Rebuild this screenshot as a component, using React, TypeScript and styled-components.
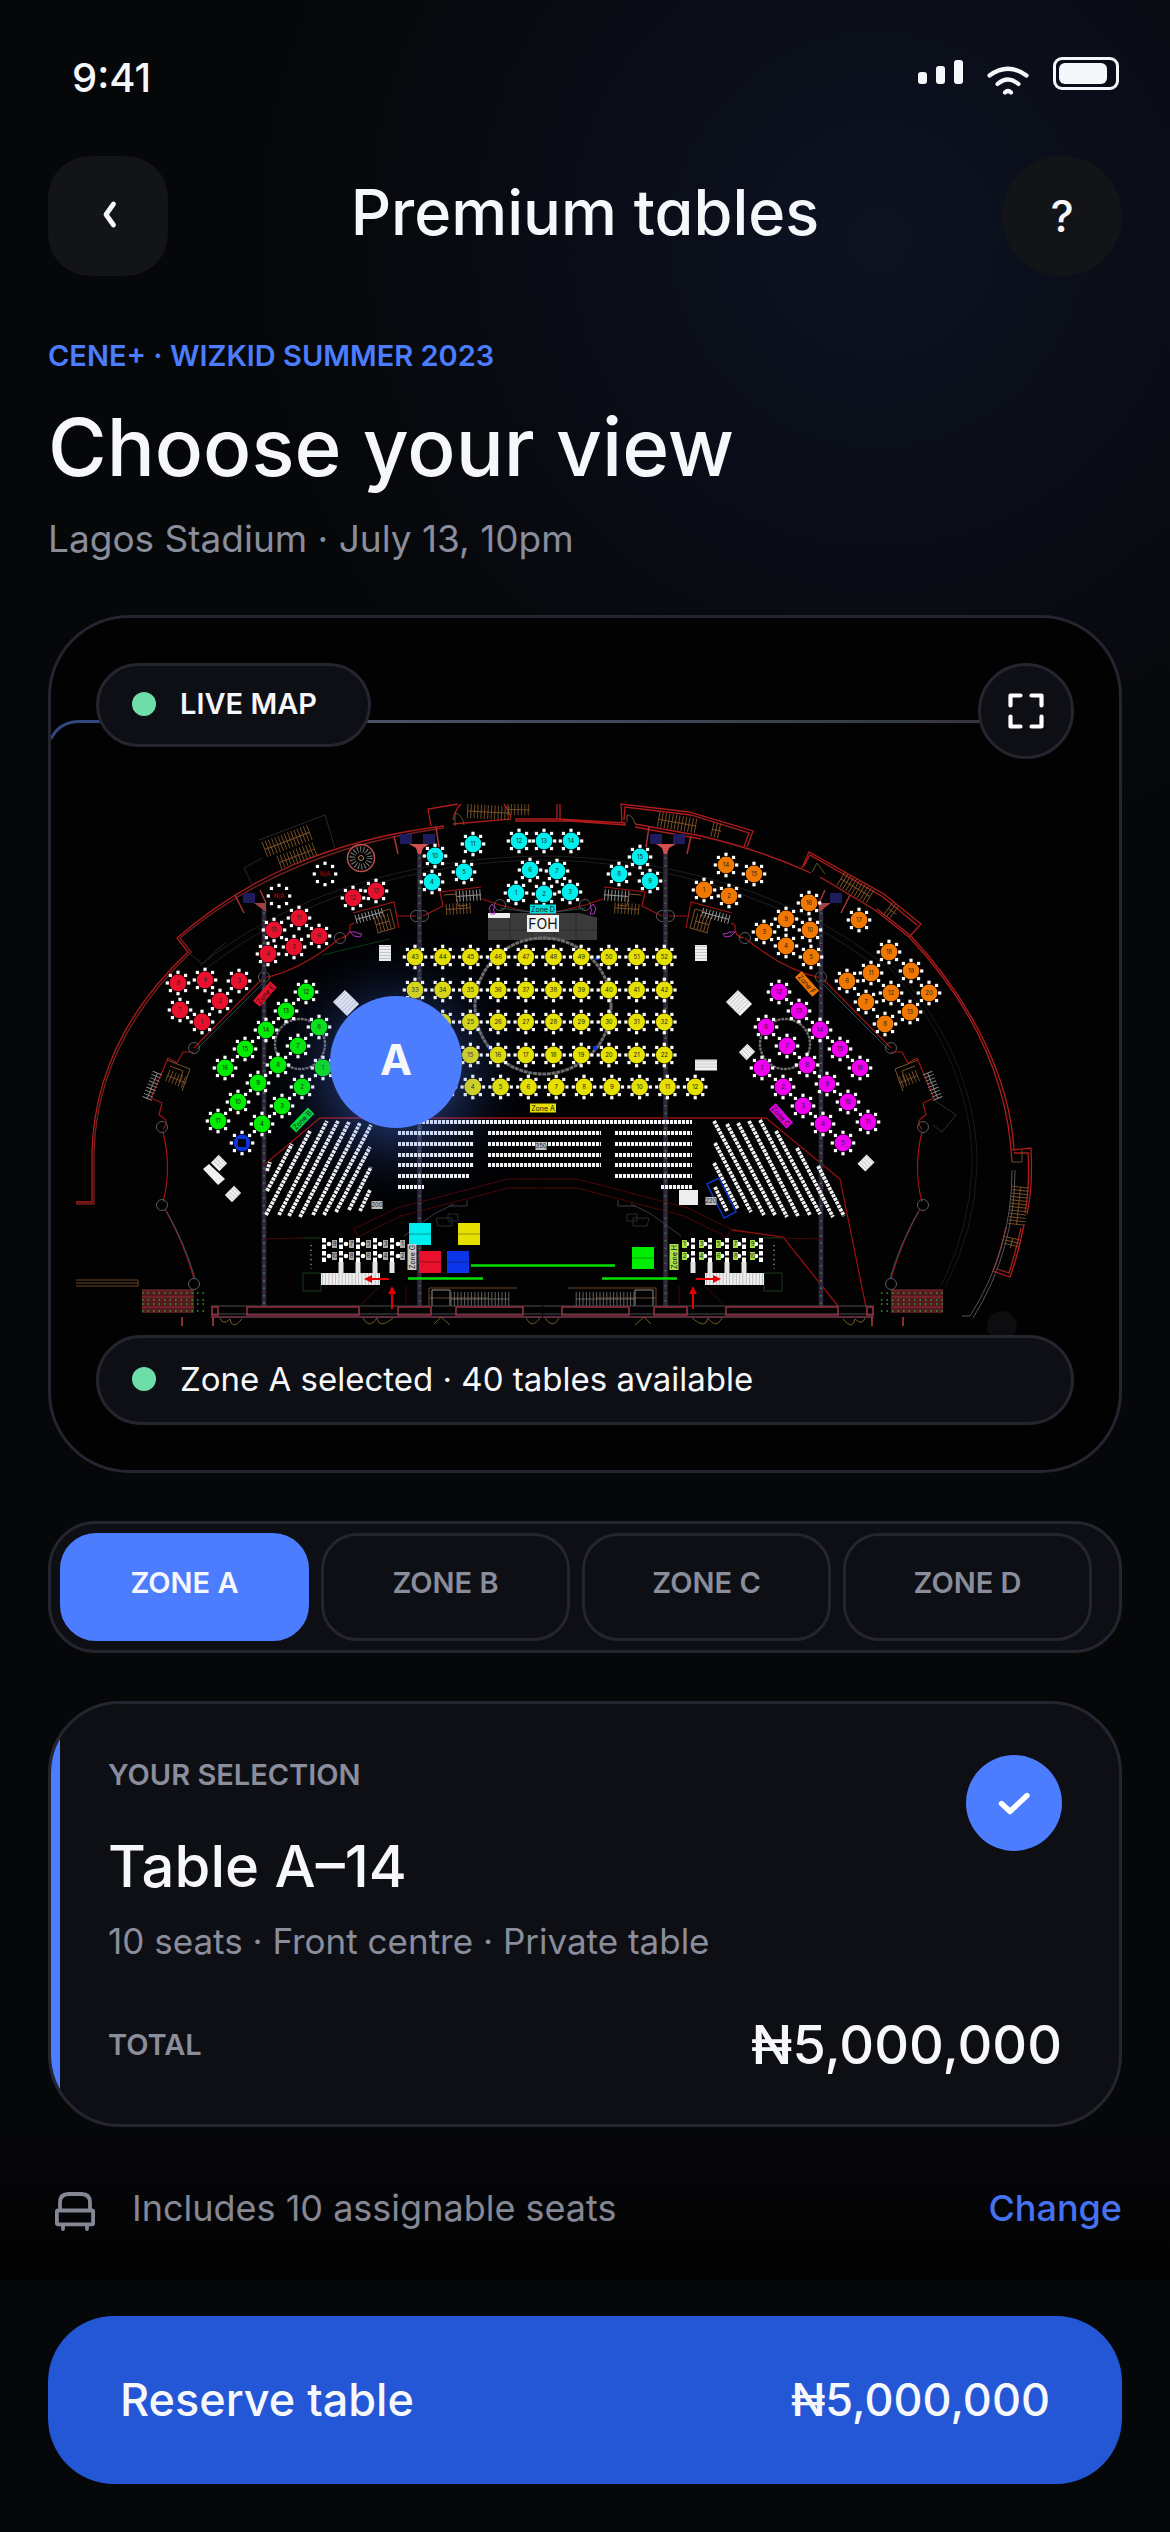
import React, { useState } from "react";
import styled, { createGlobalStyle } from "styled-components";

const color = {
  page: "#060709",
  panel: "#0e0f14",
  line: "#24252e",
  text: "#f6f7fb",
  muted: "#8a8d9b",
  accent: "#4c7dff",
  cta: "#2457d6",
  live: "#6dddaa",
};

const GlobalStyle = createGlobalStyle`
  *, *::before, *::after { box-sizing: border-box; }
  body {
    margin: 0;
    background: ${color.page};
    color: ${color.text};
    font-family: Inter, "Liberation Sans", sans-serif;
  }
  button { font: inherit; color: inherit; border: 0; padding: 0; cursor: pointer; }
  h1, h2, h3, p { margin: 0; }
`;

/* ---------- page ---------- */

const Page = styled.div`
  min-height: 100vh;
  display: flex;
  flex-direction: column;
  background: radial-gradient(circle 620px at 75% 240px, #0c1322 0%, #0a0d17 45%, rgba(6, 7, 9, 0) 100%), ${color.page};
`;

const StatusBar = styled.div`
  height: 156px;
  padding: 0 51px 0 72px;
  display: flex;
  align-items: center;
  justify-content: space-between;
`;

const Clock = styled.time`
  font-size: 40px;
  line-height: 48px;
  font-weight: 500;
`;

const Header = styled.header`
  height: 120px;
  padding: 0 48px;
  display: flex;
  align-items: center;
  justify-content: space-between;
`;

const Title = styled.h1`
  padding-bottom: 9px;
  font-size: 63px;
  line-height: 72px;
  font-weight: 500;
  font-feature-settings: "cv11";
`;

const HeaderButton = styled.button<{ $round?: boolean }>`
  width: 120px;
  height: 120px;
  display: grid;
  place-items: center;
  border-radius: ${(p) => (p.$round ? "60px" : "42px")};
  background: #131417;
  font-size: 44px;
  line-height: 54px;
  font-weight: 500;
`;

const Main = styled.main`
  flex: 1;
  display: flex;
  flex-direction: column;
`;

const Intro = styled.section`
  padding: 60px 48px 51px;
`;

const Label = styled.p<{ $tone?: string }>`
  font-size: 29px;
  line-height: 39px;
  font-weight: 600;
  color: ${(p) => p.$tone ?? color.muted};
`;

const Headline = styled.h2`
  margin-top: 24px;
  font-size: 80px;
  line-height: 96px;
  font-weight: 500;
  font-feature-settings: "cv11";
`;

const Venue = styled.p`
  margin-top: 18px;
  font-size: 37px;
  line-height: 51px;
  color: ${color.muted};
`;

/* ---------- map ---------- */

const MapCard = styled.section`
  position: relative;
  margin: 0 48px;
  border: 3px solid ${color.line};
  border-radius: 81px;
  background: #020203;
  overflow: hidden;
`;

const Plan = styled.svg`
  display: block;
  width: 100%;
  height: auto;
`;

const MapOverlay = styled.div`
  position: absolute;
  inset: 0;
  padding: 45px;
  display: flex;
  flex-direction: column;
  justify-content: space-between;
`;

const MapTools = styled.div`
  display: flex;
  align-items: flex-start;
  justify-content: space-between;
`;

const Pill = styled.div<{ $tall?: boolean }>`
  height: ${(p) => (p.$tall ? "90px" : "84px")};
  padding: 0 51px 3px 33px;
  display: flex;
  align-items: center;
  gap: 24px;
  border: 3px solid ${color.line};
  border-radius: 45px;
  background: ${color.panel};
  font-size: ${(p) => (p.$tall ? "33px" : "29px")};
  line-height: 42px;
  font-weight: ${(p) => (p.$tall ? 400 : 600)};
`;

const Dot = styled.span`
  width: 24px;
  height: 24px;
  border-radius: 12px;
  background: ${color.live};
`;

const ExpandButton = styled.button`
  width: 96px;
  height: 96px;
  display: grid;
  place-items: center;
  border: 3px solid ${color.line};
  border-radius: 48px;
  background: ${color.panel};
`;

const ZonePin = styled.button`
  position: absolute;
  left: 32.3%;
  top: 52.1%;
  width: 132px;
  height: 132px;
  margin: -66px 0 0 -66px;
  padding-bottom: 6px;
  border-radius: 66px;
  background: ${color.accent};
  box-shadow: 0 12px 72px rgba(76, 125, 255, 0.6);
  font-size: 43px;
  line-height: 54px;
  font-weight: 700;
`;

/* ---------- zone tabs ---------- */

const Tabs = styled.div`
  margin: 48px 48px 0;
  padding: 9px 27px 9px 9px;
  display: grid;
  grid-template-columns: repeat(4, 1fr);
  gap: 12px;
  border: 3px solid ${color.line};
  border-radius: 48px;
  background: ${color.panel};
`;

const Tab = styled.button<{ $active: boolean }>`
  height: 108px;
  padding-bottom: 9px;
  border: 3px solid ${(p) => (p.$active ? color.accent : color.line)};
  border-radius: 36px;
  background: ${(p) => (p.$active ? color.accent : "transparent")};
  color: ${(p) => (p.$active ? color.text : color.muted)};
  font-size: 29px;
  line-height: 39px;
  font-weight: 600;
`;

/* ---------- selection ---------- */

const Selection = styled.section`
  position: relative;
  margin: 48px 48px 0;
  padding: 51px 57px 45px;
  border: 3px solid ${color.line};
  border-radius: 72px;
  background: ${color.panel};
  overflow: hidden;

  &::before {
    content: "";
    position: absolute;
    inset: 0 auto 0 0;
    width: 9px;
    background: ${color.accent};
  }
`;

const SelectionTop = styled.div`
  display: flex;
  align-items: flex-start;
  justify-content: space-between;
`;

const TableName = styled.h3`
  margin-top: 36px;
  font-size: 58px;
  line-height: 72px;
  font-weight: 500;
`;

const TableMeta = styled.p`
  margin-top: 15px;
  font-size: 35px;
  line-height: 48px;
  color: ${color.muted};
`;

const CheckBadge = styled.span`
  width: 96px;
  height: 96px;
  display: grid;
  place-items: center;
  border-radius: 48px;
  background: ${color.accent};
`;

const TotalRow = styled.div`
  margin-top: 45px;
  display: flex;
  align-items: center;
  justify-content: space-between;
`;

const Price = styled.strong`
  font-size: 54px;
  line-height: 69px;
  font-weight: 500;
`;

const SeatsNote = styled.div`
  flex: 1;
  padding: 54px 48px 45px;
  display: flex;
  align-items: flex-start;
  gap: 30px;
  background: linear-gradient(rgba(2, 2, 3, 0), #020203);
  color: #858894;
  font-size: 36px;
  line-height: 54px;
`;

const ChangeButton = styled.button`
  margin-left: auto;
  background: none;
  color: #4671f0;
  font-weight: 500;
`;

const Footer = styled.footer`
  padding: 36px 48px 48px;
  background: ${color.page};
`;

const Reserve = styled.button`
  width: 100%;
  height: 168px;
  padding: 0 72px;
  display: flex;
  align-items: center;
  justify-content: space-between;
  border-radius: 66px;
  background: ${color.cta};
  font-size: 45px;
  line-height: 54px;
  font-weight: 500;
`;

/* ---------- floor plan data ---------- */

type Spot = [number, number, number];

const zones: { fill: string; spots: Spot[] }[] = [
  {
    fill: "#00eeee",
    spots: [
      [435, 856, 10], [473, 844, 11], [432, 882, 4], [464, 872, 5], [519, 841, 12], [544, 841, 13], [571, 841, 14],
      [530, 870, 6], [557, 871, 7], [516, 893, 1], [544, 894, 2], [570, 892, 3], [640, 857, 15], [619, 874, 8], [650, 881, 9],
    ],
  },
  {
    fill: "#e8112d",
    spots: [
      [353, 898, 12], [376, 891, 13], [274, 930, 10], [299, 918, 11], [319, 936, 6], [294, 947, 5], [268, 954, 4],
      [178, 983, 8], [205, 980, 9], [239, 981, 3], [220, 1001, 2], [180, 1010, 7], [202, 1022, 1],
    ],
  },
  {
    fill: "#f07800",
    spots: [
      [726, 865, 14], [754, 874, 15], [704, 890, 1], [729, 896, 2], [809, 903, 16], [786, 919, 9], [859, 920, 17],
      [764, 932, 3], [810, 930, 10], [786, 946, 4], [811, 957, 5], [889, 952, 18], [871, 973, 11], [847, 981, 6],
      [911, 971, 19], [891, 993, 12], [929, 993, 20], [866, 1002, 7], [910, 1012, 13], [885, 1024, 8],
    ],
  },
  {
    fill: "#00ec00",
    spots: [
      [306, 992, 12], [286, 1011, 13], [266, 1030, 14], [245, 1049, 15], [225, 1068, 16], [319, 1027, 6], [298, 1046, 7],
      [278, 1065, 8], [258, 1083, 9], [238, 1102, 10], [218, 1121, 11], [323, 1068, 1], [302, 1087, 2], [282, 1106, 3], [262, 1124, 4],
    ],
  },
  {
    fill: "#ee00ee",
    spots: [
      [779, 992, 12], [799, 1011, 13], [820, 1030, 14], [840, 1049, 15], [860, 1068, 16], [766, 1027, 6], [787, 1046, 7],
      [807, 1065, 8], [827, 1084, 9], [848, 1102, 10], [868, 1122, 11], [762, 1068, 1], [783, 1087, 2], [803, 1106, 3],
      [823, 1124, 4], [843, 1143, 5],
    ],
  },
  {
    fill: "#e6e000",
    spots: [
      ...[957, 990, 1022, 1055].flatMap((y, row) =>
        Array.from({ length: 10 }, (_, i): Spot => [415 + i * 27.7, y, 43 - row * 10 + i])
      ),
      ...Array.from({ length: 10 }, (_, i): Spot => [445 + i * 27.8, 1087, i + 3]),
    ],
  },
];

const leftStalls = [
  [267, 1171, 270, 1162], [267, 1191, 292, 1144], [266, 1215, 310, 1131], [279, 1215, 327, 1121], [289, 1216, 338, 1121],
  [300, 1217, 349, 1122], [313, 1215, 360, 1123], [324, 1215, 371, 1125], [336, 1212, 370, 1147], [349, 1210, 371, 1167],
  [360, 1211, 370, 1190],
];

const rightStalls = [
  [715, 1187, 727, 1211], [714, 1163, 738, 1209], [715, 1143, 751, 1212], [714, 1121, 764, 1215], [727, 1124, 775, 1215],
  [738, 1123, 787, 1217], [749, 1121, 798, 1216], [760, 1120, 810, 1215], [776, 1131, 820, 1214], [797, 1148, 833, 1217],
  [818, 1166, 844, 1216],
];

const centreStalls = [
  [398, 1122, 692],
  ...[1133, 1144, 1155, 1165].flatMap((y) => [[398, y, 474], [488, y, 601], [615, y, 692]]),
  [398, 1176, 469], [615, 1176, 692], [398, 1187, 424], [661, 1187, 692],
];

const seatOffsets = Array.from({ length: 8 }, (_, i) => {
  const a = (i * Math.PI) / 4;
  return [Math.cos(a) * 10.7, Math.sin(a) * 10.7];
});

function TableSpot({ x, y, fill, label }: { x: number; y: number; fill: string; label: string }) {
  return (
    <g transform={`translate(${x} ${y})`}>
      {seatOffsets.map(([dx, dy], i) => (
        <rect key={i} x={dx - 1.6} y={dy - 1.6} width="3.2" height="3.2" fill="#fff" />
      ))}
      <circle r="8.4" fill={fill} />
      <text y="2.2" textAnchor="middle" fontSize="6" fill={fill === "none" ? "#c00" : "#26261c"}>
        {label}
      </text>
    </g>
  );
}

function ZoneTag({ x, y, r = 0, fill, name, ink = "#111" }: { x: number; y: number; r?: number; fill: string; name: string; ink?: string }) {
  return (
    <g transform={`translate(${x} ${y}) rotate(${r})`}>
      <rect x="-13" y="-4.5" width="26" height="9" fill={fill} />
      <text y="2.8" textAnchor="middle" fontSize="7" fill={ink}>
        {name}
      </text>
    </g>
  );
}

function Steps({ x, y, w, h, r = 0 }: { x: number; y: number; w: number; h: number; r?: number }) {
  return (
    <g transform={`translate(${x} ${y}) rotate(${r})`}>
      <rect x={-w / 2} y={-h / 2} width={w} height={h} fill="#f0f0f0" />
      {Array.from({ length: Math.floor(h / 3) }, (_, i) => (
        <path key={i} d={`M${-w / 2} ${-h / 2 + i * 3 + 1.5}h${w}`} stroke="#b5b5b5" strokeWidth=".7" />
      ))}
    </g>
  );
}

function HatchStairs({ x, y, w, h, r = 0, stroke = "#7d5226" }: { x: number; y: number; w: number; h: number; r?: number; stroke?: string }) {
  return (
    <g transform={`translate(${x} ${y}) rotate(${r})`} stroke={stroke} strokeWidth=".9" fill="none">
      {Array.from({ length: Math.floor(w / 3.4) + 1 }, (_, i) => (
        <path key={i} d={`M${i * 3.4} 0v${h}`} />
      ))}
      <path d={`M0 ${h / 2}h${w}`} />
    </g>
  );
}

/* Structure shared by both sides of the hall; the right side is its mirror image. */
function HallSide() {
  return (
    <g fill="none">
      <path d="M264 978C292 972 316 958 340 938M194 1048L263 978M341 938q10-1 9-13l4-2M353 913l41-11 5 26M398 916h18M423 916l20-10-3-14 41-5M482 899l18 6q40 10 42 10" stroke="#a01414" strokeWidth="1.2" />
      <path d="M194 1052h-11l-6 11-9-5-17 40 11 5-3 12q12 6 4 14M163 1132q9 36 0 70M165 1209q20 36 29 70" stroke="#a01414" strokeWidth="1.2" />
      <path d="M196 1050L266 980M167 1212q18 32 28 66M500 908q22 4 42 4" stroke="#2a6468" strokeWidth=".8" />
      <g stroke="#5a5a5e" strokeWidth="1">
        <circle cx="264" cy="977" r="5.5" />
        <circle cx="340" cy="938" r="5.5" />
        <circle cx="416" cy="916" r="5.5" />
        <circle cx="423" cy="916" r="5.5" />
        <circle cx="500" cy="905" r="5.5" />
        <circle cx="194" cy="1048" r="5.5" />
        <circle cx="162" cy="1127" r="5.5" />
        <circle cx="162" cy="1205" r="5.5" />
        <circle cx="194" cy="1284" r="5.5" />
      </g>
      <HatchStairs x={355} y={915} w={28} h={9} r={-15} stroke="#9a9a9a" />
      <HatchStairs x={456} y={891} w={25} h={11} r={-4} stroke="#9a9a9a" />
      <HatchStairs x={374} y={917} w={14} h={16} r={-15} />
      <HatchStairs x={446} y={904} w={24} h={11} r={-4} />
      <path d="M380 912l10-3 5 19-18 5M444 895l12-1 2 12 10-1" stroke="#7d5226" strokeWidth="1" />
      <HatchStairs x={162} y={1075} w={28} h={10} r={112} stroke="#8a8a8a" />
      <HatchStairs x={170} y={1070} w={20} h={12} r={22} />
      <path d="M167 1060l23 9-8 22M170 1066l13 5-4 12" stroke="#7d5226" strokeWidth="1" />
      <circle cx="300" cy="1044" r="25" stroke="#6c6c6c" strokeWidth="2.4" strokeDasharray="3 .8" />
      <path d="M419.5 850V1306M264 905V1306" stroke="#34263f" strokeWidth="4.5" />
      <path d="M419.5 850V1306M264 905V1306" stroke="#2f7c35" strokeWidth="2" strokeDasharray="1.5 6" />
      <path d="M409 844h20l-6 4-2 6h-3l-2-6z" fill="#d05050" />
      <path d="M254 903h12v9z" fill="#a04040" />
      <rect x="400" y="834" width="12" height="10" fill="#1e1c5c" />
      <rect x="423" y="834" width="12" height="10" fill="#1e1c5c" />
      <rect x="243" y="893" width="12" height="10" fill="#1e1c5c" />
      <path d="M394 836l4 18M436 827l3 20M260 890l6 13M235 895l9 18" stroke="#a33" strokeWidth="1.5" />
      <path d="M354 1229l43-21 111-29h34M358 1237l43-21 107-28h34M354 1229l4 8" stroke="#4a0808" strokeWidth="1" />
      <path d="M264 1239l39-1" stroke="#4a0808" />
      <path d="M200 966C280 900 400 858 542 856M202 972C284 906 402 862 542 860" stroke="#1e1e20" strokeWidth="1" />
      <path d="M142 1290h52v23h-52z" fill="#541b1f" />
      <path d="M142 1293h62M142 1300h62M142 1304h62M142 1311h66" stroke="#3f9a36" strokeWidth="1.3" strokeDasharray="1.5 4" />
      <path d="M142 1290h52M142 1297h52M142 1307h52" stroke="#8a3034" />
      <path d="M429 1306v-18h88M429 1298h60" stroke="#6b4520" />
      <path d="M432 1306v-16h18v16" stroke="#909090" />
      <HatchStairs x={451} y={1292} w={58} h={14} stroke="#6a6a6a" />
      <path d="M211 1306h331M211 1314h331" stroke="#4c4c50" />
      <path d="M211 1317h331" stroke="#7c3a56" strokeWidth="1.5" />
      <path d="M212 1307h6v8h-6zM247 1307h112v8h-112zM398 1307h33v8h-33zM456 1307h67v8h-67z" stroke="#94323f" strokeWidth="1.6" />
      <path d="M220 1318q3 8 10 1 2 12 12 0M363 1318q6 12 14 0 2 12 16 0M434 1324l7-7 9 8M526 1318q6 12 14 0" stroke="#6f5a22" />
      <path d="M182 1317v9M213 1317v9" stroke="#8a3034" strokeWidth="2" />
      <path d="M303 1238h18M303 1273h18v18h-18z" stroke="#193a1b" />
      <path d="M311 1245v24" stroke="#bbb" strokeWidth="1.2" strokeDasharray="1.2 3.5" />
      <path d="M436 1218h16v8h-14zM448 1214h10v7h-10z" stroke="#2b2b2e" />
      <path d="M404 1236l30-22 20-10M467 1200v6h-18" stroke="#3c3c40" />
      <path d="M378 1288l-18 18M406 1286v20" stroke="#3a0808" />
      <path d="M324 1238v25M341 1238v25M358 1238v25M375 1238v25M392 1238v25" stroke="#fff" strokeWidth="4" strokeDasharray="4.5 2" />
      <path d="M341 1262v11M358 1262v11M375 1262v11M392 1262v11" stroke="#e4e4e4" strokeWidth="5" />
      {[329, 346, 363, 380, 398].map((x) => (
        <g key={x} fill="#fff">
          <circle cx={x} cy="1244" r="2.3" />
          <circle cx={x} cy="1256" r="2.3" />
        </g>
      ))}
      <rect x="321" y="1273" width="59" height="12" fill="#eee" />
      <path d="M322 1279h58" stroke="#b0b0b0" strokeWidth="12" strokeDasharray=".7 2.6" />
      <path d="M389 1279h-18" stroke="#e60000" strokeWidth="2" />
      <path d="M364 1279l8-4v8z" fill="#e60000" />
      <path d="M392 1309v-16" stroke="#e60000" strokeWidth="2" />
      <path d="M392 1286l-4 8h8z" fill="#e60000" />
      <path d="M408 1278.5h75" stroke="#00e000" strokeWidth="2.5" />
      <path d="M491 914l-2-6 3-4 3 4-2 1 2 5z" stroke="#b030c0" />
      <path d="M360 937l-6-1-4-4 6 0 1 1 5 1z" stroke="#b030c0" />
    </g>
  );
}

function FloorPlan() {
  return (
    <Plan viewBox="51 618 1068 852" role="img" aria-label="Seating plan" fontFamily="Inter, Liberation Sans, sans-serif">
      <defs>
        <linearGradient id="rim" x1="51" x2="1119" y1="0" y2="0" gradientUnits="userSpaceOnUse">
          <stop offset="0" stopColor="#2f4782" />
          <stop offset=".3" stopColor="#4a5268" />
          <stop offset="1" stopColor="#2e3034" />
        </linearGradient>
      </defs>
      <path d="M51 739Q59 721.5 80 721.5H1000" fill="none" stroke="url(#rim)" strokeWidth="3" />

      <g fill="none" stroke="#b01c1c" strokeWidth="1.3">
        <path d="M76 1202h16v-50C94 1080 124 1012 188 952l-11-14C246 878 330 840 444 826" />
        <path d="M76 1204h18v-52C96 1082 126 1014 191 952l-11-14C248 881 334 843 444 828" stroke="#7a2020" />
        <path d="M431 826l-3-17 30-5M453 824l58-5M453 820q2-10 8-16M504 804q6 8 7 14M515 819h43l68 4M515 821h55l56 4M557 804v15M560 804v15" />
        <path d="M622 822l-1-18 68 8 64 19-6 16M635 824l66 12q60 14 110 37M635 827l66 12M624 820l1-13 66 8 58 18-5 14" />
        <path d="M802 868l7-16 75 42 37 30-12 13M804 866l6-11 73 42 34 28M820 877l55 33M875 910l34 27C972 1004 1008 1080 1012 1162M877 909l34 27C974 1004 1010 1080 1014 1150" />
        <path d="M1012 1150l19-2q2 40-4 66M1024 1225q-6 30-14 52l-17-6q8-20 13-44M1014 1153h14q2 32-3 60M1021 1228q-6 26-12 45l-12-4" />
        <path d="M264 1165l56-47h446l74 61 26 128M732 1230l51 7 55 69" stroke="#960f0f" />
      </g>
      <g fill="none" stroke="#55555a">
        <path d="M1012 1170q0 80-42 146h-8M1015 1170q0 80-42 148" />
        <path d="M893 966C952 1030 978 1100 977 1167Q975 1230 945 1287M888 966C946 1030 973 1100 972 1167Q970 1228 941 1286" stroke="#19191b" />
        <path d="M259 840l66-25 10 33M244 868l18-10M244 868l8 16" stroke="#29292c" />
        <path d="M188 952l14 12 24-22" stroke="#29292c" />
        <path d="M934 1100l22 15-14 17-9-7" stroke="#24332a" />
        <path d="M322 955l68-16" stroke="#0c3a12" />
      </g>

      <HatchStairs x={262} y={842} w={48} h={16} r={-21} />
      <HatchStairs x={277} y={856} w={38} h={14} r={-21} />
      <HatchStairs x={468} y={804} w={42} h={14} r={3} />
      <HatchStairs x={508} y={804} w={22} h={11} r={1} />
      <HatchStairs x={660} y={812} w={38} h={15} r={10} />
      <HatchStairs x={714} y={822} w={9} h={15} r={12} />
      <HatchStairs x={845} y={872} w={34} h={16} r={31} />
      <HatchStairs x={893} y={902} w={10} h={16} r={36} />
      <HatchStairs x={1029} y={1188} w={38} h={17} r={96} />
      <HatchStairs x={1020} y={1240} w={10} h={15} r={103} />
      <path d="M76 1280h62M76 1283h62M76 1286h62v-6" stroke="#6b4520" fill="none" />
      <path d="M455 826v-13q8 2 9 12M627 822v-7q6 0 8 9M812 872l5-9 8 11M1012 1162h10v-12" stroke="#5d5325" fill="none" />

      <circle cx="361" cy="858" r="13.5" fill="none" stroke="#b85050" strokeWidth="1.5" />
      <circle cx="361" cy="858" r="8.5" fill="none" stroke="#777" strokeWidth="6" strokeDasharray="1 2" />
      <circle cx="361" cy="858" r="2.5" fill="none" stroke="#b08040" />

      <rect x="488" y="913" width="109" height="27" fill="#3a3a3a" />
      <path d="M488 930h109M510 913v27M532 913v27M554 913v27M576 913v27" stroke="#2a2a2a" />
      <path d="M575 912h24v6z" fill="#020203" />
      <rect x="488" y="913" width="22" height="5" fill="#eee" />
      <circle cx="543" cy="1006" r="68" fill="none" stroke="#6c6c6c" strokeWidth="3" strokeDasharray="4 .7" />

      <HallSide />
      <g transform="translate(1085 0) scale(-1 1)">
        <HallSide />
      </g>

      {[[490, 1048], [595, 1048], [489, 958], [597, 958]].map(([x, y]) => (
        <circle key={`${x}-${y}`} cx={x} cy={y} r="2.2" fill="#0b3be0" />
      ))}

      <g stroke="#f4f4f4" strokeWidth="3.8" strokeDasharray="3.1 .9" fill="none">
        {centreStalls.map(([x1, y, x2]) => (
          <path key={`${x1}-${y}`} d={`M${x1} ${y}H${x2}`} />
        ))}
        {[...leftStalls, ...rightStalls].map(([x1, y1, x2, y2]) => (
          <path key={`${x1}-${y1}`} d={`M${x1} ${y1}L${x2} ${y2}`} />
        ))}
      </g>
      <path d="M707 1184l12-6 17 34-12 6z" fill="none" stroke="#0a35c8" strokeWidth="1.5" />

      <Steps x={385} y={953} w={12} h={16} />
      <Steps x={701} y={953} w={12} h={16} />
      <Steps x={346} y={1003} w={17} h={20} r={-45} />
      <Steps x={739} y={1003} w={17} h={20} r={-45} />
      <Steps x={747} y={1052} w={11} h={12} r={45} />
      <Steps x={706} y={1065} w={22} h={11} />
      <Steps x={866} y={1163} w={11} h={13} r={45} />
      <Steps x={219} y={1163} w={12} h={11} r={45} />
      <Steps x={233} y={1194} w={10} h={13} r={45} />
      <path d="M203 1169l6-5 16 15-7 6z" fill="#f0f0f0" />
      <rect x="679" y="1190" width="19" height="15" fill="#eee" />

      {zones.map((zone) =>
        zone.spots.map(([x, y, n]) => <TableSpot key={`${zone.fill}-${n}`} x={x} y={y} fill={zone.fill} label={String(n)} />)
      )}
      <TableSpot x={325} y={874} fill="none" label="N/A" />
      <TableSpot x={279} y={896} fill="none" label="N/A" />
      <TableSpot x={242} y={1143} fill="#0a35d8" label="" />
      <rect x="238" y="1139" width="8" height="8" fill="#05060a" />

      <ZoneTag x={543} y={909} fill="#00dede" name="Zone D" />
      <rect x="527" y="915" width="32" height="17" fill="#f2f2f2" />
      <text x="543" y="929" textAnchor="middle" fontSize="14" fill="#111">FOH</text>
      <ZoneTag x={265} y={994} r={-49} fill="#e8112d" name="Zone E" />
      <ZoneTag x={302} y={1120} r={-46} fill="#00e030" name="Zone B" />
      <ZoneTag x={781} y={1116} r={48} fill="#e000e0" name="Zone C" />
      <ZoneTag x={807} y={984} r={48} fill="#f07800" name="Zone F" />
      <ZoneTag x={543} y={1108} fill="#e6e000" name="Zone A" />

      <rect x="409" y="1223" width="22" height="22" fill="#00eeee" />
      <rect x="458" y="1223" width="22" height="22" fill="#e6e000" />
      <rect x="419" y="1251" width="22" height="22" fill="#e8112d" />
      <rect x="447" y="1251" width="22" height="22" fill="#0a35e8" />
      <rect x="632" y="1247" width="22" height="22" fill="#00ee00" />
      <path d="M409 1234h22M458 1234h22M419 1262h22M447 1262h22M632 1258h22" stroke="#000" strokeOpacity=".35" />
      <path d="M471 1265.5h144" stroke="#00e000" strokeWidth="2.5" />
      <ZoneTag x={412} y={1257} r={-90} fill="#c8c8c8" name="Zone G" />
      <ZoneTag x={674} y={1257} r={-90} fill="#a6e04a" name="Zone H" />

      {[["200", 377, 1205], ["350", 541, 1146], ["220", 711, 1201]].map(([t, x, y]) => (
        <g key={t} transform={`translate(${x} ${y})`}>
          <rect x="-5.5" y="-4" width="11" height="8" fill="#bbb" />
          <text y="2.2" textAnchor="middle" fontSize="6" fill="#222">{t}</text>
        </g>
      ))}
      {[0, 1, 2, 3, 4].flatMap((i) =>
        [0, 1].map((row) => (
          <React.Fragment key={`${i}-${row}`}>
            <rect x={400 - i * 17} y={1240 + row * 12} width="5" height="8" fill="#aaa" />
            <text x={402.5 - i * 17} y={1246 + row * 12} textAnchor="middle" fontSize="6" fill="#222">{i * 2 + 1 + row}</text>
            <rect x={682 + i * 17} y={1240 + row * 12} width="5" height="8" fill="#a6e04a" />
            <text x={684.5 + i * 17} y={1246 + row * 12} textAnchor="middle" fontSize="6" fill="#222">{i * 2 + 1 + row}</text>
          </React.Fragment>
        ))
      )}
      <circle cx="1002" cy="1326" r="15" fill="#0d0d0f" />
    </Plan>
  );
}

/* ---------- icons ---------- */

const StatusIcons = () => (
  <svg width="204" height="48" viewBox="915 54 204 48" fill="none" aria-hidden="true">
    <g fill={color.text}>
      <rect x="918" y="72" width="9" height="12" rx="3" />
      <rect x="936" y="66" width="9" height="18" rx="3" />
      <rect x="954" y="60" width="9" height="24" rx="3" />
      <rect x="1059" y="63" width="48" height="21" rx="6" />
    </g>
    <rect x="1054.5" y="58.5" width="63" height="30" rx="7.5" stroke={color.text} strokeWidth="3" />
    <path d="M989.5 75.5Q1008 62 1026.500 75.5M997.5 84Q1008 75 1018.5 84M1005 92.500Q1008 89.500 1011 92.5" stroke={color.text} strokeWidth="4.2" strokeLinecap="round" />
  </svg>
);

const BackIcon = () => (
  <svg width="24" height="36" viewBox="96 198 24 36" fill="none" aria-hidden="true">
    <path d="M113.5 204L106 214.5l7.500 10.5" stroke={color.text} strokeWidth="4.8" strokeLinecap="round" strokeLinejoin="round" />
  </svg>
);

const ExpandIcon = () => (
  <svg width="36" height="36" viewBox="0 0 36 36" fill="none" aria-hidden="true">
    <path d="M2.5 12.5V2.5h10M23.5 2.5h10v10M33.5 23.5v10h-10M12.5 33.5h-10v-10" stroke="#fff" strokeWidth="4.2" strokeLinecap="round" strokeLinejoin="round" />
  </svg>
);

const CheckIcon = () => (
  <svg width="36" height="36" viewBox="996 1785 36 36" fill="none" aria-hidden="true">
    <path d="M1001.5 1803.5l8.500 8 17-16" stroke="#fff" strokeWidth="5.4" strokeLinecap="round" strokeLinejoin="round" />
  </svg>
);

const ChairIcon = () => (
  <svg width="54" height="54" viewBox="48 2180 54 54" fill="none" stroke="#858894" strokeWidth="3.8" strokeLinecap="round" aria-hidden="true">
    <path d="M60 2208v-6.5Q60 2193 68.5 2193h13Q90 2193 90 2201.5V2208" />
    <rect x="56.9" y="2209.5" width="36.2" height="13.8" rx="1" />
    <path d="M63 2224v4M87 2224v4" />
  </svg>
);

/* ---------- app ---------- */

export default function App() {
  const [zone, setZone] = useState("A");

  return (
    <>
      <GlobalStyle />
      <Page>
        <StatusBar>
          <Clock>9:41</Clock>
          <StatusIcons />
        </StatusBar>
        <Header>
          <HeaderButton aria-label="Back"><BackIcon /></HeaderButton>
          <Title>Premium tables</Title>
          <HeaderButton $round aria-label="Help">?</HeaderButton>
        </Header>
        <Main>
          <Intro>
            <Label $tone={color.accent}>CENE+ · WIZKID SUMMER 2023</Label>
            <Headline>Choose your view</Headline>
            <Venue>Lagos Stadium · July 13, 10pm</Venue>
          </Intro>

          <MapCard>
            <FloorPlan />
            <ZonePin>A</ZonePin>
            <MapOverlay>
              <MapTools>
                <Pill><Dot />LIVE MAP</Pill>
                <ExpandButton aria-label="Full screen"><ExpandIcon /></ExpandButton>
              </MapTools>
              <Pill $tall><Dot />Zone A selected · 40 tables available</Pill>
            </MapOverlay>
          </MapCard>

          <Tabs role="tablist">
            {["A", "B", "C", "D"].map((z) => (
              <Tab key={z} role="tab" aria-selected={z === zone} $active={z === zone} onClick={() => setZone(z)}>
                ZONE {z}
              </Tab>
            ))}
          </Tabs>

          <Selection>
            <SelectionTop>
              <div>
                <Label>YOUR SELECTION</Label>
                <TableName>Table A–14</TableName>
                <TableMeta>10 seats · Front centre · Private table</TableMeta>
              </div>
              <CheckBadge><CheckIcon /></CheckBadge>
            </SelectionTop>
            <TotalRow>
              <Label>TOTAL</Label>
              <Price>₦5,000,000</Price>
            </TotalRow>
          </Selection>

          <SeatsNote>
            <ChairIcon />
            <span>Includes 10 assignable seats</span>
            <ChangeButton>Change</ChangeButton>
          </SeatsNote>
        </Main>
        <Footer>
          <Reserve>
            <span>Reserve table</span>
            <span>₦5,000,000</span>
          </Reserve>
        </Footer>
      </Page>
    </>
  );
}
